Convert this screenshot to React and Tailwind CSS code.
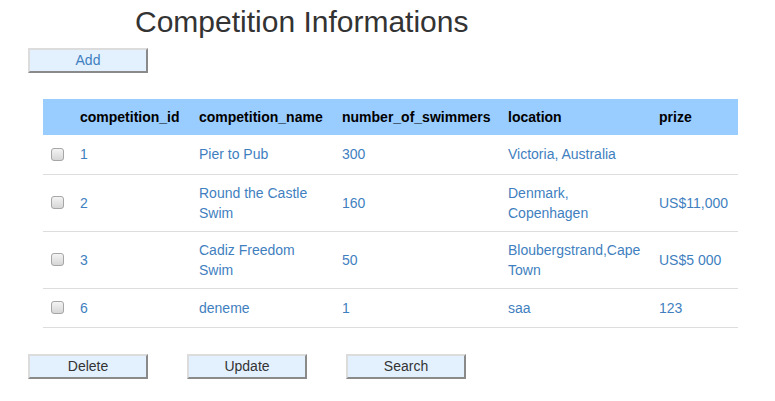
const rows = [
  { id: "1", name: "Pier to Pub", num: "300", loc: "Victoria, Australia", prize: "", h: "h-[39px]" },
  { id: "2", name: "Round the Castle Swim", num: "160", loc: "Denmark, Copenhagen", prize: "US$11,000", h: "h-[57px]" },
  { id: "3", name: "Cadiz Freedom Swim", num: "50", loc: "Bloubergstrand,Cape Town", prize: "US$5 000", h: "h-[57px]" },
  { id: "6", name: "deneme", num: "1", loc: "saa", prize: "123", h: "h-[39px]" },
];

function Btn({ children, blue }) {
  return (
    <button
      className={
        "w-[120px] h-[25px] bg-[#e3f1fe] border-2 border-t-[#dcdcdc] border-l-[#dcdcdc] border-b-[#8a8a8a] border-r-[#8a8a8a] text-[14px] leading-[21px] " +
        (blue ? "text-[#3f7fc0]" : "text-[#333]")
      }
    >
      {children}
    </button>
  );
}

function Checkbox() {
  return (
    <div className="w-[13px] h-[13px] rounded-[3px] border border-[#a6a6a6] bg-gradient-to-b from-[#f4f4f4] to-[#d6d6d6]" />
  );
}

export default function App() {
  return (
    <div className="w-[775px] h-[401px] bg-white font-['Liberation_Sans',Arial,sans-serif] text-[14px] text-[#333]">
      <h1 className="pt-[5px] pl-[135px] text-[30px] leading-[33px] text-[#333]">Competition Informations</h1>
      <div className="pl-[28px] mt-[10px]">
        <Btn blue>Add</Btn>
      </div>
      <table className="ml-[43px] mt-[26px] w-[695px] table-fixed border-collapse">
        <colgroup>
          <col className="w-[29px]" />
          <col className="w-[119px]" />
          <col className="w-[143px]" />
          <col className="w-[166px]" />
          <col className="w-[151px]" />
          <col className="w-[87px]" />
        </colgroup>
        <thead>
          <tr className="h-[36px] bg-[#99ccff] text-black font-bold text-left">
            <th></th>
            <th className="px-[8px]">competition_id</th>
            <th className="px-[8px]">competition_name</th>
            <th className="px-[8px]">number_of_swimmers</th>
            <th className="px-[8px]">location</th>
            <th className="px-[8px]">prize</th>
          </tr>
        </thead>
        <tbody className="text-[#3f7fc0] leading-[20px]">
          {rows.map((r) => (
            <tr key={r.id} className={r.h + " border-b border-[#dddddd]"}>
              <td className="pl-[8px] align-middle">
                <Checkbox />
              </td>
              <td className="px-[8px] align-middle">{r.id}</td>
              <td className="px-[8px] align-middle">{r.name}</td>
              <td className="px-[8px] align-middle">{r.num}</td>
              <td className="px-[8px] align-middle">{r.loc}</td>
              <td className="px-[8px] align-middle">{r.prize}</td>
            </tr>
          ))}
        </tbody>
      </table>
      <div className="flex gap-[39px] pl-[28px] mt-[26px]">
        <Btn>Delete</Btn>
        <Btn>Update</Btn>
        <Btn>Search</Btn>
      </div>
    </div>
  );
}
